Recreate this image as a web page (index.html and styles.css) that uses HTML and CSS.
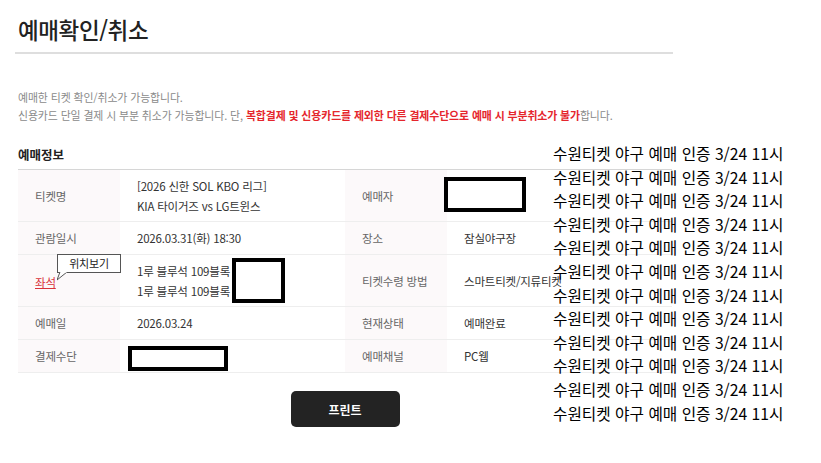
FILE: index.html
```html
<!DOCTYPE html>
<html lang="ko">
<head>
<meta charset="utf-8">
<title>예매확인/취소</title>
<link rel="stylesheet" href="styles.css">
</head>
<body>
<div class="page">
  <h1 class="title">예매확인/취소</h1>
  <div class="notes">
    <p>예매한 티켓 확인/취소가 가능합니다.</p>
    <p>신용카드 단일 결제 시 부분 취소가 가능합니다. 단, <strong>복합결제 및 신용카드를 제외한 다른 결제수단으로 예매 시 부분취소가 불가</strong>합니다.</p>
  </div>
  <h2 class="section">예매정보</h2>
  <div class="table">
    <div class="row tall">
      <div class="lbl">티켓명</div>
      <div class="val">[2026 신한 SOL KBO 리그]<br>KIA 타이거즈 vs LG트윈스</div>
      <div class="lbl">예매자</div>
      <div class="val"><span class="redact r1"></span></div>
    </div>
    <div class="row">
      <div class="lbl">관람일시</div>
      <div class="val">2026.03.31(화) 18:30</div>
      <div class="lbl">장소</div>
      <div class="val">잠실야구장</div>
    </div>
    <div class="row tall">
      <div class="lbl"><span class="seat">좌석</span>
        <span class="tip">위치보기<svg class="tail" width="12" height="9" viewBox="0 0 12 9"><path d="M3 0 L0 8 L10 0" fill="#fff" stroke="#555" stroke-width="1"/><rect x="3.6" y="-1" width="6" height="1.6" fill="#fff"/></svg></span>
      </div>
      <div class="val">1루 블루석 109블록<br>1루 블루석 109블록<span class="redact r2"></span></div>
      <div class="lbl">티켓수령 방법</div>
      <div class="val">스마트티켓/지류티켓</div>
    </div>
    <div class="row">
      <div class="lbl">예매일</div>
      <div class="val">2026.03.24</div>
      <div class="lbl">현재상태</div>
      <div class="val">예매완료</div>
    </div>
    <div class="row">
      <div class="lbl">결제수단</div>
      <div class="val"><span class="redact r3"></span></div>
      <div class="lbl">예매채널</div>
      <div class="val">PC웹</div>
    </div>
  </div>
  <div class="actions">
    <button class="print" type="button">프린트</button>
  </div>
</div>
<div class="overlay">
  <p>수원티켓 야구 예매 인증 3/24 11시</p>
  <p>수원티켓 야구 예매 인증 3/24 11시</p>
  <p>수원티켓 야구 예매 인증 3/24 11시</p>
  <p>수원티켓 야구 예매 인증 3/24 11시</p>
  <p>수원티켓 야구 예매 인증 3/24 11시</p>
  <p>수원티켓 야구 예매 인증 3/24 11시</p>
  <p>수원티켓 야구 예매 인증 3/24 11시</p>
  <p>수원티켓 야구 예매 인증 3/24 11시</p>
  <p>수원티켓 야구 예매 인증 3/24 11시</p>
  <p>수원티켓 야구 예매 인증 3/24 11시</p>
  <p>수원티켓 야구 예매 인증 3/24 11시</p>
  <p>수원티켓 야구 예매 인증 3/24 11시</p>
</div>
</body>
</html>
```
FILE: styles.css
```css
html, body {
  margin: 0;
  padding: 0;
  background: #fff;
}
body {
  font-family: "Noto Sans CJK KR", "Noto Sans", sans-serif;
  color: #333;
  position: relative;
  width: 821px;
  height: 463px;
  overflow: hidden;
}
.page {
  margin-left: 15px;
  width: 658px;
}
.title {
  margin: 0;
  padding: 14px 0 8px 3px;
  font-size: 22.5px;
  line-height: 30px;
  font-weight: 500;
  color: #222;
  letter-spacing: -0.4px;
  border-bottom: 2px solid #dedede;
}
.notes {
  margin: 34px 0 0 3px;
  font-size: 10.9px;
  line-height: 18px;
  color: #8a8a8a;
  letter-spacing: -0.1px;
}
.notes p {
  margin: 0;
  white-space: nowrap;
}
.notes strong {
  color: #e5262c;
  font-weight: 700;
}
.section {
  margin: 22px 0 5px 3px;
  font-size: 12.5px;
  line-height: 18px;
  font-weight: 700;
  color: #222;
}
.table {
  margin-left: 3px;
  width: 654px;
  border-top: 1px solid #d6d6d6;
}
.row {
  display: grid;
  grid-template-columns: 102px 225px 102px 225px;
  height: 32px;
  border-bottom: 1px solid #eeeeee;
  font-size: 11.5px;
  letter-spacing: -0.2px;
}
.row.tall {
  height: 51px;
}
.lbl {
  position: relative;
  background: #fcf9fa;
  color: #666;
  padding-left: 17px;
  display: flex;
  align-items: center;
}
.val {
  position: relative;
  color: #333;
  padding-left: 17px;
  display: flex;
  flex-direction: column;
  justify-content: center;
  line-height: 20px;
}
.seat {
  color: #d9333a;
  text-decoration: underline;
  margin-top: 2px;
}
.tip {
  position: absolute;
  left: 39px;
  top: -1px;
  width: 62px;
  height: 17px;
  border: 1px solid #555;
  background: #fff;
  color: #222;
  font-size: 11px;
  line-height: 17px;
  text-align: center;
}
.tail {
  position: absolute;
  left: -1px;
  top: 17px;
}
.redact {
  position: absolute;
  box-sizing: border-box;
  border: 4px solid #000;
  background: #fff;
}
.r1 { left: -3px; top: 7px; width: 82px; height: 35px; }
.r2 { left: 112px; top: 3px; width: 53px; height: 45px; }
.r3 { left: 8px; top: 6px; width: 100px; height: 25px; }
.actions {
  display: flex;
  justify-content: center;
  margin: 18px 0 0 3px;
  width: 654px;
}
.print {
  width: 109px;
  height: 36px;
  border: none;
  border-radius: 5px;
  background: #232323;
  color: #fff;
  font-family: "Noto Sans CJK KR", sans-serif;
  font-size: 12px;
  font-weight: 700;
}
.overlay {
  position: absolute;
  left: 553px;
  top: 142px;
  font-size: 15.7px;
  font-weight: 400;
  color: #000;
  line-height: 23.6px;
}
.overlay p {
  margin: 0;
  white-space: nowrap;
}
```
